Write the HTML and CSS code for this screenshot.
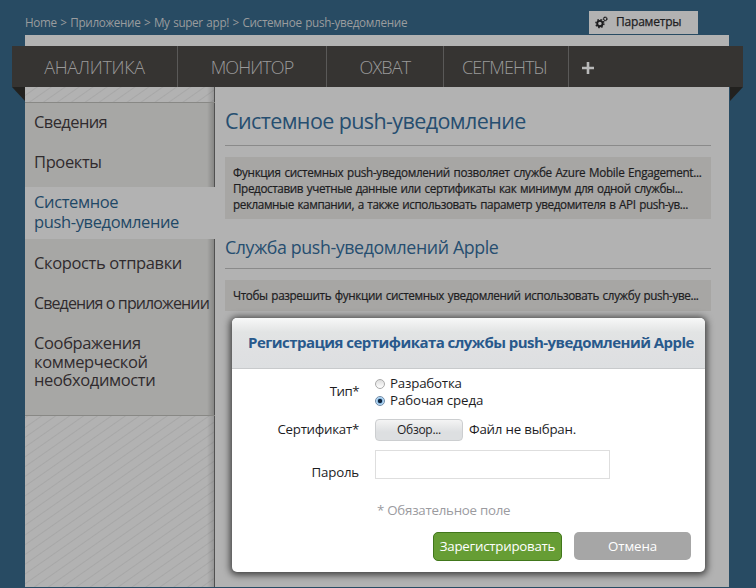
FILE: index.html
```html
<!DOCTYPE html>
<html lang="ru">
<head>
<meta charset="utf-8">
<title>Системное push-уведомление</title>
<link rel="stylesheet" href="styles.css">
</head>
<body>
<header class="top">
  <nav class="crumbs">Home &gt; Приложение &gt; My super app! &gt; Системное push-уведомление</nav>
  <a class="settings">
    <svg width="13" height="13" viewBox="0 0 13 13" fill="none" stroke="#1d1d1f">
      <circle cx="4.9" cy="7.6" r="2.7" stroke-width="1.9"/>
      <circle cx="4.9" cy="7.6" r="4" stroke-width="1.4" stroke-dasharray="1.57 1.57"/>
      <circle cx="10.2" cy="2.9" r="1.6" stroke-width="1"/>
      <circle cx="10.2" cy="2.9" r="2.2" stroke-width=".7" stroke-dasharray=".86 .86"/>
    </svg>
    <span>Параметры</span>
  </a>
</header>
<div class="panel">
  <nav class="tabs">
    <a class="tab t1">АНАЛИТИКА</a>
    <a class="tab t2">МОНИТОР</a>
    <a class="tab t3">ОХВАТ</a>
    <a class="tab t4">СЕГМЕНТЫ</a>
    <a class="add"><svg width="12" height="12"><path d="M0 6H12M6 0V12" stroke="#b9b9b9" stroke-width="2.6"/></svg></a>
  </nav>
  <div class="columns">
    <aside class="side">
      <div class="menu">
        <a class="item up"><span class="w1">Сведения</span></a>
        <a class="item up"><span class="w2">Проекты</span></a>
        <a class="item active"><span class="w3">Системное</span><span class="w4">push-уведомление</span></a>
        <a class="item gap"><span class="w5">Скорость отправки</span></a>
        <a class="item"><span class="w6">Сведения о приложении</span></a>
        <a class="item tall"><span class="w7">Соображения</span><span class="w8">коммерческой</span><span class="w9">необходимости</span></a>
      </div>
    </aside>
    <main class="main">
      <h1>Системное push-уведомление</h1>
      <div class="note"><p class="n1">Функция системных push-уведомлений позволяет службе Azure Mobile Engagement...</p><p class="n2">Предоставив учетные данные или сертификаты как минимум для одной службы...</p><p class="n3">рекламные кампании, а также использовать параметр уведомителя в API push-ув...</p></div>
      <h2>Служба push-уведомлений Apple</h2>
      <div class="note single"><p class="n4">Чтобы разрешить функции системных уведомлений использовать службу push-уве...</p></div>
    </main>
  </div>
</div>
<form class="dialog">
  <h3>Регистрация сертификата службы push-уведомлений Apple</h3>
  <div class="row type"><span class="label">Тип*</span>
    <div class="options">
      <label><i class="radio"></i><span class="o1">Разработка</span></label>
      <label><i class="radio on"></i><span class="o2">Рабочая среда</span></label>
    </div>
  </div>
  <div class="row cert"><span class="label">Сертификат*</span><span class="browse">Обзор...</span><span class="file">Файл не выбран.</span></div>
  <div class="row pass"><span class="label">Пароль</span><span class="field"></span></div>
  <p class="required">* Обязательное поле</p>
  <div class="actions"><span class="btn ok">Зарегистрировать</span><span class="btn cancel">Отмена</span></div>
</form>
</body>
</html>
```
FILE: styles.css
```css
* { box-sizing: border-box; margin: 0; padding: 0; }
body {
  width: 756px; height: 588px; overflow: hidden; position: relative;
  background: #284b63; font-family: "Open Sans", "Noto Sans", sans-serif;
  font-size: 12px; color: #1d1d1f; white-space: nowrap;
}
.top { height: 35px; display: flex; justify-content: space-between; padding: 11px 58px 0 25px; }
.crumbs { font-size: 11.7px; line-height: 22px; color: #9a9c9e; letter-spacing: -.31px; word-spacing: .8px; }
.settings { width: 109px; height: 23px; background: #b2b2b2; display: flex; padding: 5px 0 0 6px; gap: 8px; font-size: 12px; line-height: 12px; letter-spacing: -.2px; -webkit-text-stroke: .25px #1d1d1f; }
.settings svg { flex: none; }
.panel { margin: 0 27px 0 25px; height: 552px; background: #b2b2b2; padding-top: 11px; }
.tabs { position: relative; height: 41px; margin: 0 -14px 0 -13px; background: #363432; display: flex; }
.tabs::before, .tabs::after { content: ""; position: absolute; top: 41px; width: 13px; height: 14px; background: #22211f; }
.tabs::before { left: 0; clip-path: polygon(0 0, 100% 0, 100% 100%); }
.tabs::after { right: 0; clip-path: polygon(0 0, 100% 0, 0 100%); }
.tab { font-size: 18px; font-weight: 300; line-height: 42px; color: #9a9a9a; text-align: center; border-right: 1px solid #5a5958; }
.t1 { width: 166px; letter-spacing: -.3px; }
.t2 { width: 149px; letter-spacing: -.9px; }
.t3 { width: 117px; letter-spacing: -.8px; }
.t4 { width: 125px; letter-spacing: -.9px; padding-right: 3px; }
.add { padding: 15px 0 0 13px; }
.columns { display: flex; height: 500px; }
.side {
  width: 190px; padding-top: 15px; border-right: 1px solid #505050;
  background: linear-gradient(90deg, transparent 182px, rgba(0,0,0,.16)), repeating-linear-gradient(145deg, #b2b2b2 0 6px, #a7a7a7 7px, #b2b2b2 8px);
}
.menu {
  height: 314px; margin-right: -1px; border: solid #888885; border-width: 1px 0;
  background: linear-gradient(90deg, transparent 182px, rgba(0,0,0,.2) 189px, #505050 189px), #a7a7a5;
}
.item { display: block; height: 40px; padding-left: 9px; font-size: 16.5px; line-height: 40px; color: #302b2e; }
.item span { display: block; }
.item.up { line-height: 38px; }
.item.active { height: 52px; margin-top: 4px; padding-top: 5px; background: #b2b2b2; line-height: 20px; color: #1f4866; }
.item.gap { margin-top: 4px; }
.item.tall { padding-top: 11px; line-height: 18.6px; }
.w2, .w3, .w4, .w5, .w7, .w8, .w9 { letter-spacing: -.37px; }
.w1 { letter-spacing: -.6px; }
.w6 { font-size: 16px; letter-spacing: -.88px; }
.main { width: 486px; margin-left: 10px; }
h1, h2 { font-weight: 400; color: #264e70; border-bottom: 1px solid #8a8a8a; }
h1 { height: 59px; font-size: 21.5px; line-height: 67px; letter-spacing: -.6px; margin-bottom: 11px; }
h2 { height: 50px; font-size: 17.8px; line-height: 56px; letter-spacing: -.38px; margin-bottom: 11px; }
.note { background: #a7a6a4; padding: 7px 8px; -webkit-text-stroke: .2px #1d1d1f; }
.note.single { padding-bottom: 8px; }
.note p { font-size: 11.7px; line-height: 17px; word-spacing: 1px; height: 16px; }
.note .n1 { letter-spacing: -.31px; }
.note .n2 { letter-spacing: -.39px; }
.note .n3 { letter-spacing: -.4px; }
.note .n4 { letter-spacing: -.375px; }
.dialog { position: absolute; left: 232px; top: 318px; width: 473px; height: 254px; background: #fff; border-radius: 5px; box-shadow: 0 1px 7px 2px rgba(0,0,0,.65); font-size: 13.3px; letter-spacing: -.2px; }
h3 { height: 51px; padding-left: 16px; border-bottom: 1px solid #c8cacc; border-radius: 5px 5px 0 0; background: linear-gradient(#f7f8f8, #e2e4e4 14px, #dfe0e2 35px, #dddfe1); color: #28598c; font-size: 15px; line-height: 49px; letter-spacing: -.54px; }
.row { display: flex; }
.label { width: 127px; margin-right: 16px; text-align: right; }
.type { height: 45px; padding-top: 6px; }
.type .label { line-height: 33px; letter-spacing: -.5px; }
.options label { display: flex; align-items: center; height: 17px; line-height: 15px; }
.radio { width: 10px; height: 10px; border-radius: 50%; border: 1px solid #aaa; margin-right: 5px; background: linear-gradient(#ddd, #fff); }
.radio.on { border-color: #6f8ba8; background: radial-gradient(circle, #10253d 0 1.8px, #8fc0ea 2.6px, #c9e4f8 4px); }
.o2 { letter-spacing: -.1px; }
.cert { height: 36px; padding-top: 5px; line-height: 21px; }
.cert .label { letter-spacing: -.27px; }
.browse { width: 88px; height: 22px; border: 1px solid #ccced0; border-radius: 4px; background: linear-gradient(#f4f4f4, #dddfe1 60%); text-align: center; font-size: 12px; line-height: 20px; letter-spacing: -.3px; }
.file { margin-left: 6px; }
.pass { height: 30px; line-height: 44px; }
.field { width: 235px; height: 29px; border: 1px solid #dedede; }
.required { margin: 19px 0 0 145px; height: 22px; line-height: 22px; color: #9b9b9f; letter-spacing: -.25px; }
.actions { display: flex; gap: 12px; margin: 11px 0 0 201px; }
.btn { color: #fff; text-align: center; border-radius: 5px; }
.ok { width: 129px; height: 29px; background: #669d34; border: 1px solid #41771b; line-height: 27px; letter-spacing: -.25px; }
.cancel { width: 117px; height: 28px; background: #a6a6a6; line-height: 28px; letter-spacing: -.1px; }
```
